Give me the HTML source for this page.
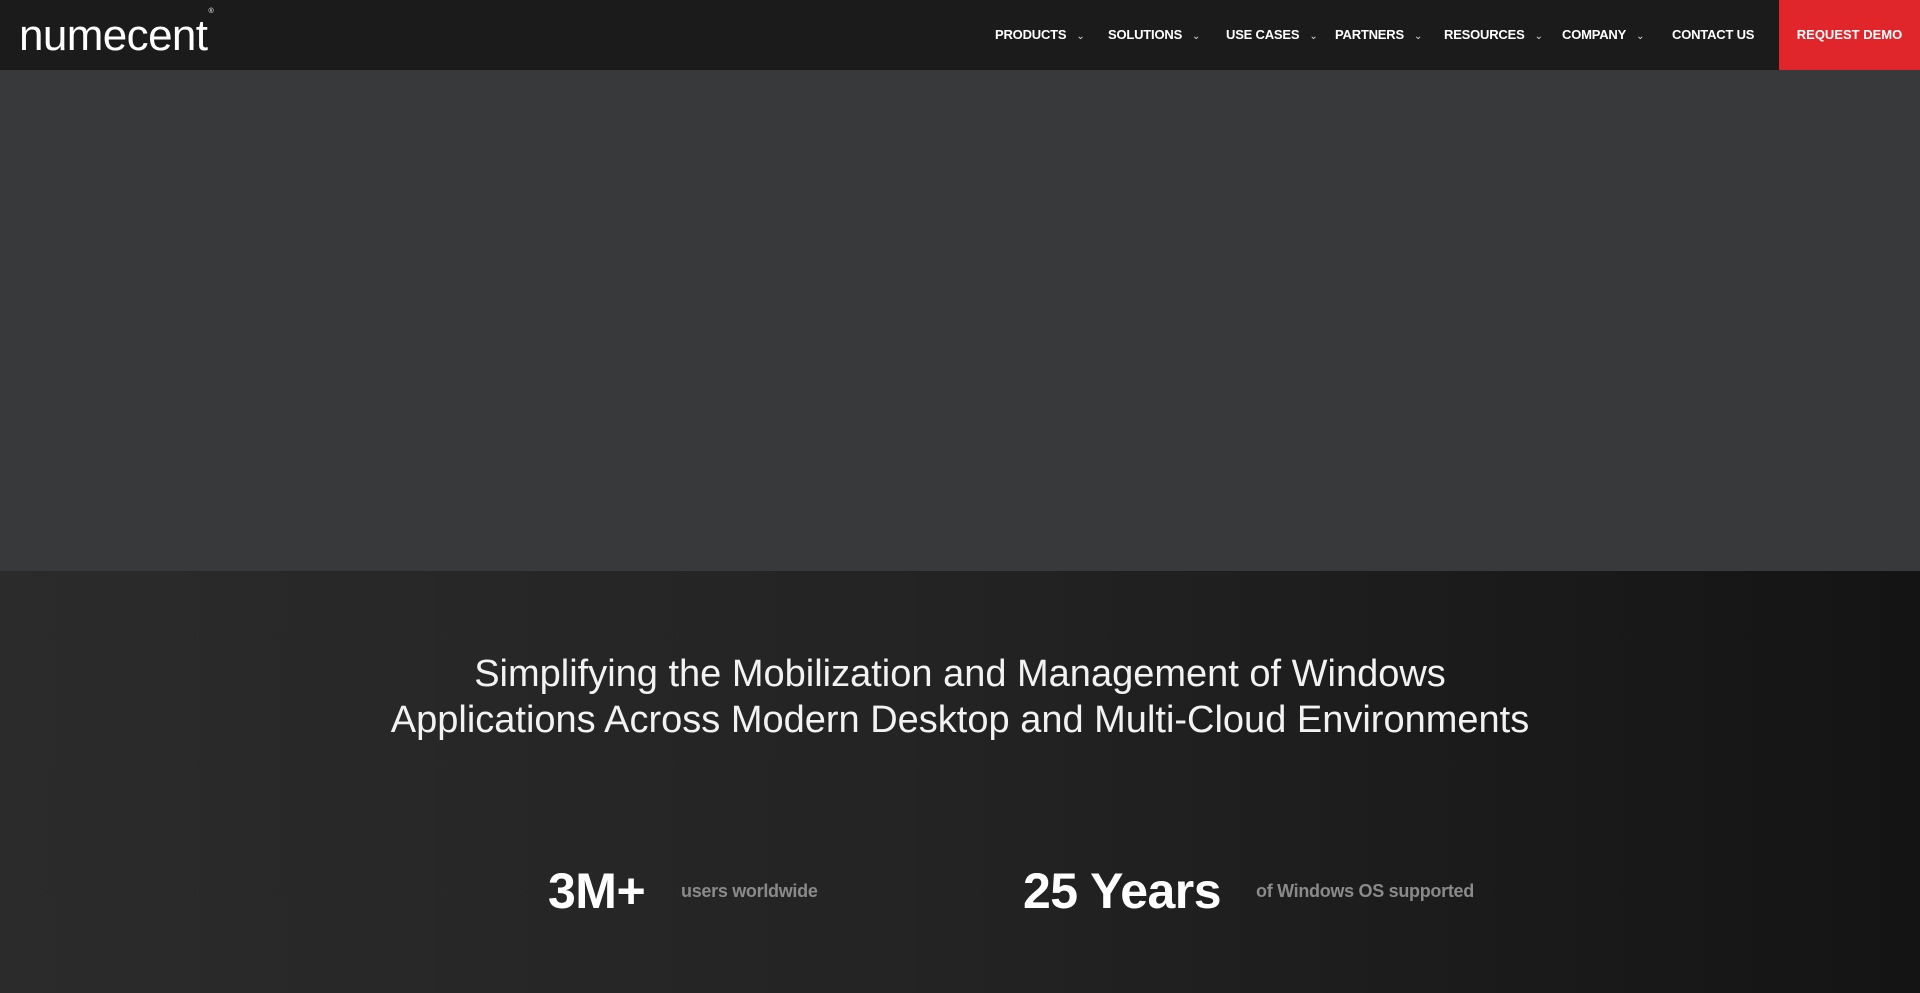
<!DOCTYPE html>
<html><head><style>
*{margin:0;padding:0;box-sizing:border-box}
body{width:1920px;height:993px;overflow:hidden;background:#1e1e1e;font-family:"Liberation Sans",sans-serif;color:#fff}
.nav{position:absolute;left:0;top:0;width:1920px;height:70px;background:#1b1b1c}
.logo{position:absolute;left:19px;top:11px;font-size:44px;letter-spacing:-0.6px;font-weight:400;color:#fff}
.logo sup{font-size:7px;position:relative;top:-21px;left:1px}
.menu{position:absolute;top:27px;font-size:13px;font-weight:bold;letter-spacing:-0.2px;white-space:nowrap}
.menu span{position:absolute}
.menu i{font-style:normal;font-weight:normal;font-size:10px;margin-left:10px;color:#ddd}
.demo{position:absolute;left:1779px;top:0;width:141px;height:70px;background:#e0262a;font-size:13px;font-weight:bold;text-align:center;line-height:70px}
.hero{position:absolute;left:0;top:70px;width:1920px;height:501px;background:#38393b}
.low{position:absolute;left:0;top:571px;width:1920px;height:422px;background:linear-gradient(90deg,#2b2b2b,#232323 50%,#141414)}
h1{position:absolute;top:651px;left:0;width:1920px;text-align:center;font-weight:normal;font-size:38px;line-height:46px;color:#f2f2f2}
.big{position:absolute;top:862px;font-size:50px;font-weight:bold;letter-spacing:-0.5px}
.sm{position:absolute;top:881px;font-size:18px;font-weight:bold;color:#8a8a8a;letter-spacing:-0.3px}
</style></head><body>
<div class="nav">
<div class="logo">numecent<sup>®</sup></div>
<div class="menu">
<span style="left:995px">PRODUCTS<i>⌄</i></span>
<span style="left:1108px">SOLUTIONS<i>⌄</i></span>
<span style="left:1226px">USE CASES<i>⌄</i></span>
<span style="left:1335px">PARTNERS<i>⌄</i></span>
<span style="left:1444px">RESOURCES<i>⌄</i></span>
<span style="left:1562px">COMPANY<i>⌄</i></span>
<span style="left:1672px">CONTACT US</span>
</div>
<div class="demo">REQUEST DEMO</div>
</div>
<div class="hero"></div>
<div class="low"></div>
<h1>Simplifying the Mobilization and Management of Windows<br>Applications Across Modern Desktop and Multi-Cloud Environments</h1>
<div class="big" style="left:548px">3M+</div>
<div class="sm" style="left:681px">users worldwide</div>
<div class="big" style="left:1023px">25 Years</div>
<div class="sm" style="left:1256px">of Windows OS supported</div>
</body></html>
